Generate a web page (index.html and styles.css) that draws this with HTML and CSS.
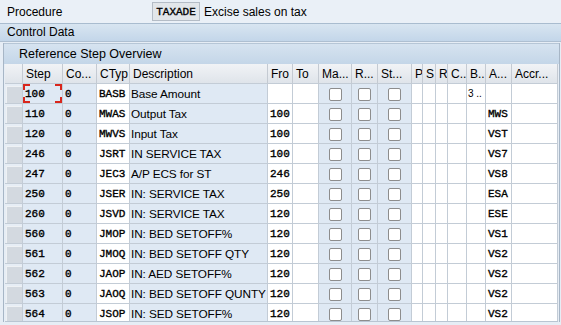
FILE: index.html
```html
<!DOCTYPE html>
<html lang="en">
<head>
  <meta charset="UTF-8">
  <title>Procedure - Control Data</title>
  <link rel="stylesheet" href="styles.css">
</head>
<body>

  <!-- Procedure header field -->
  <div class="field-row">
    <span class="field-label">Procedure</span>
    <span class="code-box">TAXADE</span>
    <span class="field-text">Excise sales on tax</span>
  </div>

  <div class="section-bar">Control Data</div>

  <div class="panel">
    <div class="panel-title">Reference Step Overview</div>

    <div class="grid-wrap">
      <table class="grid">
        <colgroup>
          <col style="width:18px"><col style="width:40px"><col style="width:34px"><col style="width:33px">
          <col style="width:138px"><col style="width:25px"><col style="width:26px"><col style="width:33px">
          <col style="width:26px"><col style="width:34px"><col style="width:11px"><col style="width:13px">
          <col style="width:12px"><col style="width:19px"><col style="width:19px"><col style="width:26px">
          <col style="width:46px">
        </colgroup>
        <thead>
          <tr>
            <th class="sel"></th>
            <th>Step</th><th>Co...</th><th>CTyp</th><th>Description</th><th>Fro</th><th>To</th>
            <th>Ma...</th><th>R...</th><th>St...</th><th>P</th><th>S</th><th>R</th>
            <th>C..</th><th>B..</th><th>A...</th><th>Accr...</th>
          </tr>
        </thead>
        <tbody id="rows"></tbody>
      </table>
    </div>
  </div>

  <script>
    // step, counter, condition type, description, from, account key
    const steps = [
      ['100', '0', 'BASB', 'Base Amount', '', ''],
      ['110', '0', 'MWAS', 'Output Tax', '100', 'MWS'],
      ['120', '0', 'MWVS', 'Input Tax', '100', 'VST'],
      ['246', '0', 'JSRT', 'IN SERVICE TAX', '100', 'VS7'],
      ['247', '0', 'JEC3', 'A/P ECS for ST', '246', 'VS8'],
      ['250', '0', 'JSER', 'IN: SERVICE TAX', '250', 'ESA'],
      ['260', '0', 'JSVD', 'IN: SERVICE TAX', '120', 'ESE'],
      ['560', '0', 'JMOP', 'IN: BED SETOFF%', '120', 'VS1'],
      ['561', '0', 'JMOQ', 'IN: BED SETOFF QTY', '120', 'VS2'],
      ['562', '0', 'JAOP', 'IN: AED SETOFF%', '120', 'VS2'],
      ['563', '0', 'JAOQ', 'IN: BED SETOFF QUNTY', '120', 'VS2'],
      ['564', '0', 'JSOP', 'IN: SED SETOFF%', '120', 'VS2']
    ];

    const tbody = document.getElementById('rows');
    const box = '<span class="cb"></span>';

    steps.forEach(function (s, i) {
      const tr = document.createElement('tr');
      tr.innerHTML =
        '<td class="sel"><span class="sel-btn"></span></td>' +
        '<td class="ro mono' + (i === 0 ? ' focus' : '') + '">' + s[0] + '</td>' +
        '<td class="ro mono">' + s[1] + '</td>' +
        '<td class="mono">' + s[2] + '</td>' +
        '<td class="ro desc">' + s[3] + '</td>' +
        '<td class="mono">' + s[4] + '</td>' +
        '<td></td>' +
        '<td class="ro chk">' + box + '</td>' +
        '<td class="ro chk">' + box + '</td>' +
        '<td class="ro chk">' + box + '</td>' +
        '<td></td><td></td><td></td><td></td>' +
        '<td class="small">' + (i === 0 ? '3 ..' : '') + '</td>' +
        '<td class="mono">' + s[5] + '</td>' +
        '<td></td>';
      tbody.appendChild(tr);
    });
  </script>

</body>
</html>
```

FILE: styles.css
```css
/* Global */
body {
  margin: 0;
  font-family: 'Liberation Sans', Arial, sans-serif;
  font-size: 12px;
  color: #000;
  background: #e6edf5;
  width: 561px;
  height: 325px;
  overflow: hidden;
}

/* Procedure field row */
.field-row {
  height: 23px;
  display: flex;
  align-items: center;
  padding-left: 7px;
  background: #eaf0f7;
}

.field-label {
  width: 145px;
}

.code-box {
  box-sizing: border-box;
  height: 19px;
  width: 48px;
  display: flex;
  align-items: center;
  justify-content: center;
  font-family: 'Liberation Mono', 'Courier New', monospace;
  font-size: 11px;
  -webkit-text-stroke: 0.35px #000;
  background: #e2e6ea;
  border: 1px solid #b4bcc6;
  margin-right: 4px;
}

/* Section bars */
.section-bar {
  height: 17px;
  line-height: 17px;
  padding-left: 7px;
  border-top: 1px solid #a9bccf;
  border-bottom: 1px solid #aebfd1;
  background: linear-gradient(#d8e5f1, #c3d6e9);
}

.panel {
  margin: 1px 1px 0 3px;
  border-left: 1px solid #a7b6c6;
  border-right: 1px solid #a7b6c6;
  padding-left: 1px;
  background: #e6edf5;
}

.panel-title {
  height: 20px;
  line-height: 21px;
  margin-left: -1px;
  padding-left: 15px;
  font-size: 12.5px;
  border-top: 1px solid #b6c6d6;
  background: linear-gradient(#d6e3f0, #c4d6e8);
}

/* Table */
.grid-wrap {
  height: 257px;
  overflow: hidden;
  border-bottom: 1px solid #b9c5d2;
  width: 553px;
}

.grid {
  table-layout: fixed;
  border-collapse: separate;
  border-spacing: 0;
  width: 553px;
}

.grid th,
.grid td {
  height: 19px;
  padding: 0 2px;
  border-right: 1px solid #c3ccd6;
  border-bottom: 1px solid #c3ccd6;
  white-space: nowrap;
  overflow: hidden;
  text-align: left;
  background: #fff;
}

.grid th {
  font-weight: normal;
  font-size: 12px;
  padding: 1px 3px 0;
  height: 18px;
  background: linear-gradient(#f1f3f6, #dfe4ea);
  border-right-color: #c4cad2;
}

.grid td.ro {
  background: #dfe9f4;
}

.grid td.desc {
  padding: 0 1px;
  font-size: 11.8px;
  letter-spacing: -0.1px;
}

.grid td.mono {
  font-family: 'Liberation Mono', 'Courier New', monospace;
  font-size: 11px;
  -webkit-text-stroke: 0.35px #000;
}

.grid td.small {
  font-size: 10px;
  padding: 0 1px;
}

/* Selector column */
.grid td.sel {
  padding: 0;
  background: #e6edf5;
}

.sel-btn {
  display: block;
  height: 17px;
  margin: 1px 0 0 1px;
  background: #d3d9e0;
  border-top: 1px solid #eef1f4;
  border-left: 1px solid #eef1f4;
  box-sizing: border-box;
}

/* Checkboxes */
.grid td.chk {
  text-align: center;
  padding: 0;
}

.cb {
  display: inline-block;
  width: 11px;
  height: 11px;
  border: 1px solid #8d8d8d;
  border-radius: 2px;
  background: #fff;
  vertical-align: middle;
}

/* Focus corners on the current cell */
.grid td.focus {
  background:
    linear-gradient(#d9261c, #d9261c) left top / 7px 2px no-repeat,
    linear-gradient(#d9261c, #d9261c) left top / 2px 6px no-repeat,
    linear-gradient(#d9261c, #d9261c) right top / 7px 2px no-repeat,
    linear-gradient(#d9261c, #d9261c) right top / 2px 6px no-repeat,
    linear-gradient(#d9261c, #d9261c) left bottom / 7px 2px no-repeat,
    linear-gradient(#d9261c, #d9261c) left bottom / 2px 6px no-repeat,
    linear-gradient(#d9261c, #d9261c) right bottom / 7px 2px no-repeat,
    linear-gradient(#d9261c, #d9261c) right bottom / 2px 6px no-repeat,
    #dfe9f4;
}
```
